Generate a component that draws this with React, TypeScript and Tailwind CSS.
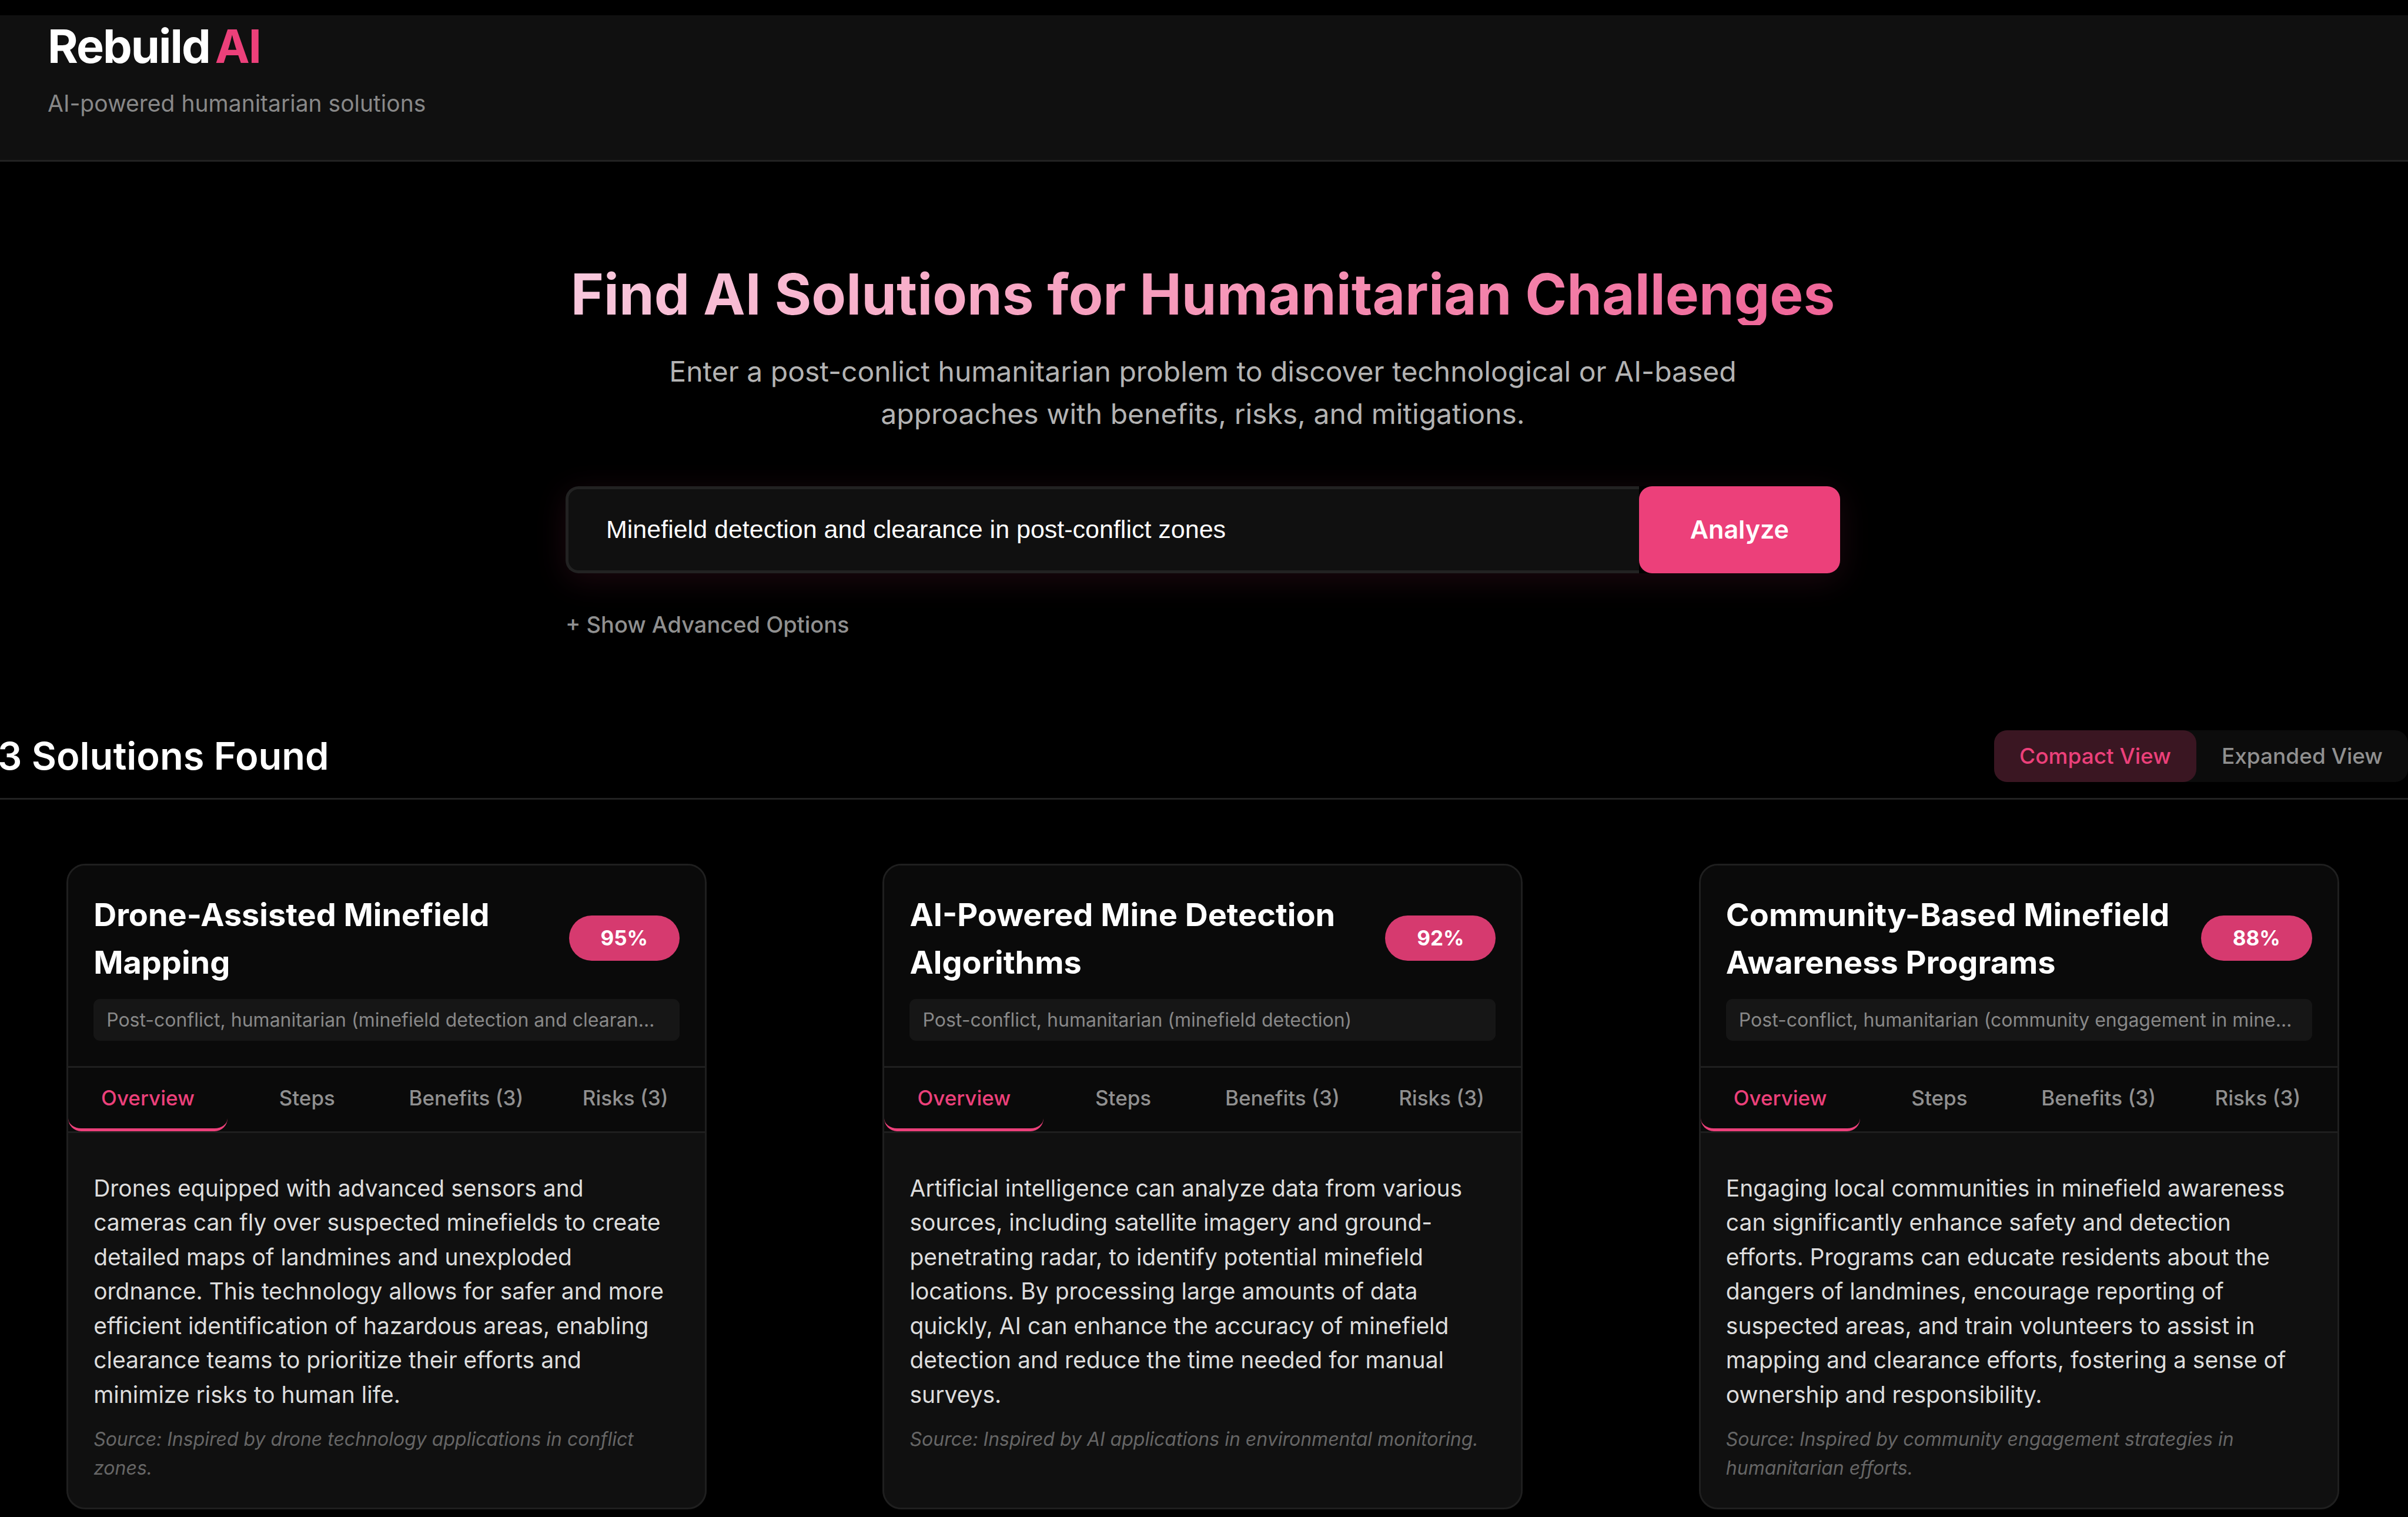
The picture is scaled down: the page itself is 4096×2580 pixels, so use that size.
import { useState } from "react";

type Solution = {
  title: string;
  match: number;
  context: string;
  overview: string;
  source: string;
};

const solutions: Solution[] = [
  {
    title: "Drone-Assisted Minefield Mapping",
    match: 95,
    context: "Post-conflict, humanitarian (minefield detection and clearance)",
    overview:
      "Drones equipped with advanced sensors and cameras can fly over suspected minefields to create detailed maps of landmines and unexploded ordnance. This technology allows for safer and more efficient identification of hazardous areas, enabling clearance teams to prioritize their efforts and minimize risks to human life.",
    source: "Source: Inspired by drone technology applications in conflict zones.",
  },
  {
    title: "AI-Powered Mine Detection Algorithms",
    match: 92,
    context: "Post-conflict, humanitarian (minefield detection)",
    overview:
      "Artificial intelligence can analyze data from various sources, including satellite imagery and ground-penetrating radar, to identify potential minefield locations. By processing large amounts of data quickly, AI can enhance the accuracy of minefield detection and reduce the time needed for manual surveys.",
    source: "Source: Inspired by AI applications in environmental monitoring.",
  },
  {
    title: "Community-Based Minefield Awareness Programs",
    match: 88,
    context: "Post-conflict, humanitarian (community engagement in minefield awareness)",
    overview:
      "Engaging local communities in minefield awareness can significantly enhance safety and detection efforts. Programs can educate residents about the dangers of landmines, encourage reporting of suspected areas, and train volunteers to assist in mapping and clearance efforts, fostering a sense of ownership and responsibility.",
    source: "Source: Inspired by community engagement strategies in humanitarian efforts.",
  },
];

const tabs = ["Overview", "Steps", "Benefits (3)", "Risks (3)"];

function SolutionCard({ solution }: { solution: Solution }) {
  const [active, setActive] = useState("Overview");
  return (
    <article className="flex w-full max-w-[1089px] flex-col overflow-hidden rounded-[32px] border-3 border-[#1f1f1f] bg-[#101010]">
      <div className="border-b-3 border-[#1f1f1f] bg-[#0a0a0a] p-[43px]">
        <div className="flex items-center justify-between gap-8">
          <h3 className="text-[54px] leading-[81px] font-bold text-white">{solution.title}</h3>
          <span className="shrink-0 rounded-full bg-[#d63a6f] px-[54px] py-3 text-[35px] leading-[53px] font-bold text-white">
            {solution.match}%
          </span>
        </div>
        <p
          title={solution.context}
          className="mt-[22px] truncate rounded-[11px] bg-[#161616] py-[11px] pr-8 pl-[22px] text-[32px] leading-[49px] text-[#888888]"
        >
          {solution.context}
        </p>
      </div>
      <div role="tablist" className="flex border-b-3 border-[#1f1f1f] bg-[#0a0a0a]">
        {tabs.map((tab) => (
          <button
            key={tab}
            type="button"
            role="tab"
            aria-selected={tab === active}
            onClick={() => setActive(tab)}
            className={
              tab === active
                ? "flex-1 basis-0 rounded-[22px] border-b-5 border-[#ec407a] py-[25px] text-[35px] leading-[53px] font-medium text-[#ec407a]"
                : "flex-1 basis-0 rounded-[22px] border-b-5 border-transparent py-[25px] text-[35px] leading-[53px] font-medium text-[#909090]"
            }
          >
            {tab}
          </button>
        ))}
      </div>
      <div className="flex-1 px-[43px] pt-[65px] pb-[43px]">
        <p className="text-[39px] leading-normal text-[#dddddd]">{solution.overview}</p>
        <p className="mt-[22px] text-[32px] leading-[49px] text-[#666666] italic">{solution.source}</p>
      </div>
    </article>
  );
}

export default function App() {
  const [view, setView] = useState("Compact View");
  return (
    <div className="min-h-screen overflow-x-hidden bg-black pt-[26px] font-[Inter,sans-serif] text-white">
      <header className="border-b-3 border-[#222222] bg-[#101010] px-[81px] pt-[13px] pb-[66px]">
        <div className="flex gap-[9px] text-[79px] leading-[78px] font-bold tracking-tight">
          <span>Rebuild</span>
          <span className="text-[#ec407a]">AI</span>
        </div>
        <p className="mt-[30px] text-[39px] leading-normal text-[#888888]">AI-powered humanitarian solutions</p>
      </header>

      <main className="-ml-1">
        <section className="mx-auto w-full max-w-[2168px] pt-[173px]">
          <h1 className="bg-linear-135 from-[#f8cade] to-[#ee6296] bg-clip-text text-center text-[96px] leading-[105px] font-bold text-transparent">
            Find AI Solutions for Humanitarian Challenges
          </h1>
          <p className="mx-auto mt-[43px] max-w-[1898px] text-center text-[48px] leading-[72px] text-[#b3b3b3]">
            Enter a post-conlict humanitarian problem to discover technological or AI-based approaches with benefits,
            risks, and mitigations.
          </p>
          <form
            className="mt-[87px] flex h-[148px] rounded-[22px] shadow-[0_11px_54px_rgba(236,64,122,0.12)]"
            onSubmit={(e) => e.preventDefault()}
          >
            <input
              type="text"
              aria-label="Humanitarian problem"
              defaultValue="Minefield detection and clearance in post-conflict zones"
              className="min-w-0 flex-1 rounded-l-[22px] border-5 border-r-0 border-[#222222] bg-[#101010] px-[64px] font-[Liberation_Sans,Arial,sans-serif] text-[43px] text-white outline-none"
            />
            <div className="flex rounded-r-[22px] bg-black">
              <button type="submit" className="rounded-[22px] bg-[#ec407a] px-[87px] text-[43px] font-semibold text-white">
                Analyze
              </button>
            </div>
          </form>
          <button type="button" className="mt-[59px] block text-[38px] leading-[56px] font-medium text-[#909090]">
            + Show Advanced Options
          </button>
        </section>

        <section className="mt-[152px]">
          <div className="flex items-center justify-between border-b-3 border-[#222222] pb-[27px]">
            <h2 className="text-[65px] leading-[88px] font-semibold">3 Solutions Found</h2>
            <div className="flex rounded-[22px] bg-[#0c0c0c]">
              {["Compact View", "Expanded View"].map((name) => (
                <button
                  key={name}
                  type="button"
                  aria-pressed={name === view}
                  onClick={() => setView(name)}
                  className={
                    name === view
                      ? "rounded-[22px] bg-[#3a1622] px-[43px] py-4 text-[37px] leading-[56px] font-medium text-[#ec407a]"
                      : "rounded-[22px] px-[43px] py-4 text-[37px] leading-[56px] font-medium text-[#909090]"
                  }
                >
                  {name}
                </button>
              ))}
            </div>
          </div>
          <div className="mt-[109px] grid grid-cols-3 justify-items-center gap-[65px]">
            {solutions.map((s) => (
              <SolutionCard key={s.title} solution={s} />
            ))}
          </div>
        </section>
      </main>
    </div>
  );
}
